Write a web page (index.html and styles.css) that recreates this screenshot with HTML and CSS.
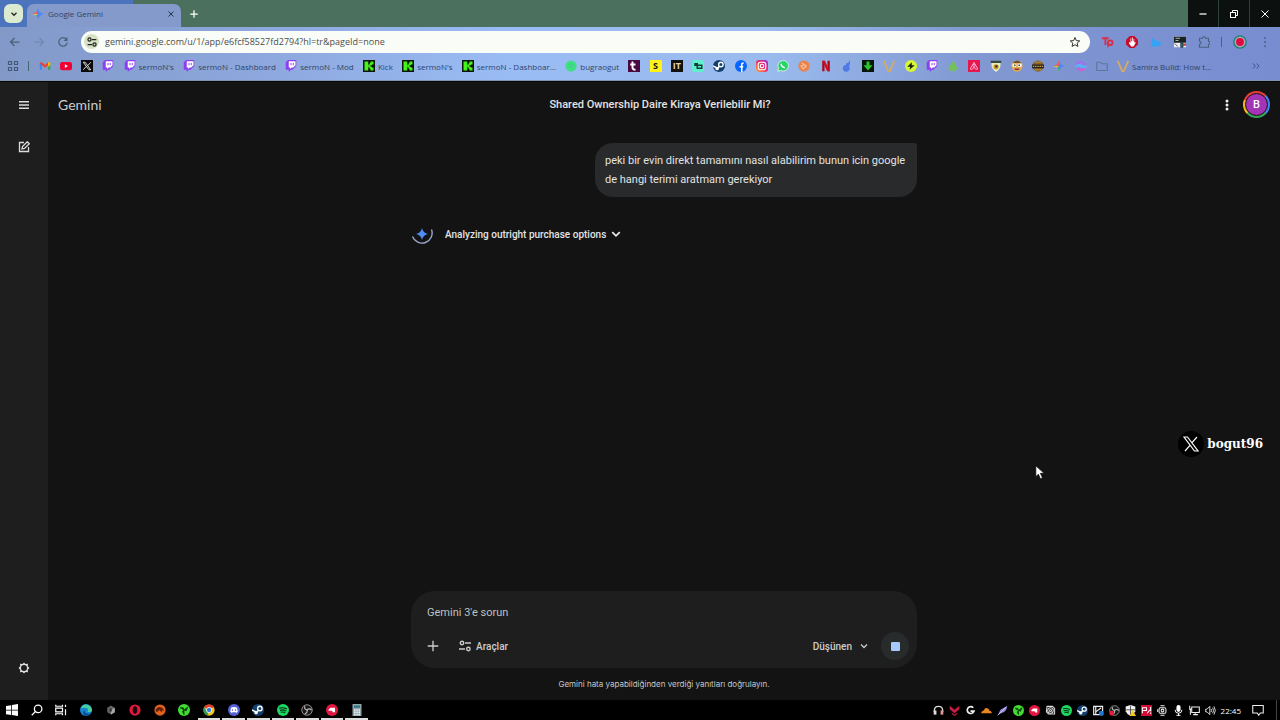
FILE: index.html
```html
<!DOCTYPE html>
<html lang="tr">
<head>
    <meta charset="UTF-8">
    <meta name="viewport" content="width=device-width, initial-scale=1.0">
    <title>Google Gemini</title>
    <link rel="stylesheet" href="styles.css">
</head>
<body>
    <header class="browser">
        <div class="tab-strip">
            <div class="tab-search">
                <button class="tab-list" aria-label="Sekmelerde ara"><svg class="i8" viewBox="0 0 16 16"><path d="M3 5.500l5 5 5-5" fill="none" stroke="#222" stroke-width="2.500"/></svg></button>
            </div>
            <div class="tab">
                <svg class="i12" viewBox="0 0 16 16"><use href="#gemini"/></svg>
                <span class="tab-title">Google Gemini</span>
                <button class="bare" aria-label="Sekmeyi kapat"><svg class="i8" viewBox="0 0 16 16"><path d="M3 3l10 10M13 3L3 13" stroke="#28344d" stroke-width="2"/></svg></button>
            </div>
            <button class="bare new-tab" aria-label="Yeni sekme"><svg class="i10" viewBox="0 0 16 16"><path d="M8 2v12M2 8h12" stroke="#fff" stroke-width="2"/></svg></button>
            <div class="window-buttons">
                <button aria-label="Simge durumuna küçült"><svg class="i8" viewBox="0 0 16 16"><path d="M1 8h14" stroke="#fff" stroke-width="2.500"/></svg></button>
                <button aria-label="Önceki boyut"><svg class="i8" viewBox="0 0 16 16" fill="none" stroke="#fff" stroke-width="2"><rect x="1" y="5" width="10" height="10"/><path d="M5 5V1h10v10h-4"/></svg></button>
                <button aria-label="Kapat"><svg class="i8" viewBox="0 0 16 16"><path d="M1 1l14 14M15 1L1 15" stroke="#fff" stroke-width="2"/></svg></button>
            </div>
        </div>

        <div class="toolbar">
            <button class="bare" aria-label="Geri"><svg class="i12" viewBox="0 0 24 24" fill="none" stroke="#4a6178" stroke-width="2.500"><path d="M21 12H4M11 4l-8 8 8 8"/></svg></button>
            <button class="bare" aria-label="İleri"><svg class="i12" viewBox="0 0 24 24" fill="none" stroke="#7189b0" stroke-width="2.500"><path d="M3 12h17M13 4l8 8-8 8"/></svg></button>
            <button class="bare" aria-label="Yenile"><svg class="i12" viewBox="0 0 24 24"><path d="M19 7a8.500 8.500 0 1 0 1.500 6" fill="none" stroke="#4a6178" stroke-width="2.500"/><path d="M21 2v8h-8z" fill="#4a6178"/></svg></button>
            <div class="omnibox">
                <button class="site-info" aria-label="Site bilgileri"><svg class="i10" viewBox="0 0 16 16"><use href="#sliders"/></svg></button>
                <input class="url" type="text" aria-label="Adres çubuğu" value="gemini.google.com/u/1/app/e6fcf58527fd2794?hl=tr&amp;pageId=none">
                <button class="bare" aria-label="Yer işareti ekle"><svg class="i12" viewBox="0 0 24 24"><path d="M12 3l2.700 6.200 6.800.6-5.200 4.500 1.600 6.600-5.900-3.500-5.900 3.500 1.600-6.600L2.500 9.800l6.800-.6z" fill="none" stroke="#333" stroke-width="2"/></svg></button>
            </div>
            <div class="extensions">
                <svg class="i12" viewBox="0 0 16 16"><path d="M0 3h9M4.500 3v9" stroke="#d52f4d" stroke-width="2.500"/><circle cx="11" cy="9" r="3" fill="none" stroke="#d52f4d" stroke-width="2.500"/><path d="M8 8v7" stroke="#d52f4d" stroke-width="2"/></svg>
                <svg class="i12" viewBox="0 0 16 16"><path d="M5 0h6l5 5v6l-5 5H5l-5-5V5z" fill="#c70d2c"/><path d="M4 8v2l3 4h3l3-5-1-1-1 1V4h-1v3H9V2H8v5H7V3H6v6z" fill="#fff"/></svg>
                <svg class="i12" viewBox="0 0 16 16"><path d="M3 2c1 3 4 3 6 5 3-1 5 1 6 3-2 4-6 5-9 4l-5 1c2-4 1-8 2-13z" fill="#36a2f4"/></svg>
                <svg class="i12" viewBox="0 0 16 16"><path d="M0 1h16v14H0z" fill="#eee"/><path d="M0 1h16v8H0z" fill="#17241f"/><path d="M2 3h6M2 6h4" stroke="#ddd"/><path d="M1 10l4 4M9 9h3v6H9z" stroke="#225" fill="#287b4b"/><path d="M12 10h4v3h-4z" fill="#c33"/></svg>
                <svg class="i12" viewBox="0 0 16 16"><path d="M2 3h4a2 2 0 0 1 4 0h4v4a2 2 0 0 1 0 4v4H2v-4a2 2 0 0 0 0-4z" fill="none" stroke="#49617c" stroke-width="1.500"/></svg>
                <span class="bar-divider"></span>
                <svg class="i14" viewBox="0 0 16 16"><circle cx="8" cy="8" r="7" fill="#b8a5b7" stroke="#10866d" stroke-width="1.500"/><circle cx="8" cy="8" r="4.500" fill="#df0a42"/></svg>
                <svg class="i12" viewBox="0 0 16 16" fill="#48618a"><circle cx="8" cy="2.500" r="1.300"/><circle cx="8" cy="8" r="1.300"/><circle cx="8" cy="13.500" r="1.300"/></svg>
            </div>
        </div>

        <nav class="bookmarks" aria-label="Yer işaretleri">
            <a href="#" aria-label="Uygulamalar"><svg class="i12" viewBox="0 0 16 16" fill="none" stroke="#415b78" stroke-width="1.600"><path d="M2 2h4v4H2zM10 2h4v4h-4zM2 10h4v4H2zM10 10h4v4h-4z"/></svg></a>
            <span class="bar-divider"></span>
            <a href="#" aria-label="Gmail"><svg class="i12" viewBox="0 0 16 16"><path d="M1 4h3v9H1z" fill="#4285f4"/><path d="M12 4h3v9h-3z" fill="#34a853"/><path d="M2 3.500l6 5 6-5" fill="none" stroke="#ea4335" stroke-width="3"/><path d="M12 3h3v4l-3 2z" fill="#fbbc04"/></svg></a>
            <a href="#" aria-label="YouTube"><svg class="i12" viewBox="0 0 16 16"><rect x="0" y="2.500" width="16" height="11" rx="3" fill="#f00033"/><path d="M6.500 5.500v5l4-2.500z" fill="#fff"/></svg></a>
            <a href="#" aria-label="X"><svg class="i12" viewBox="0 0 16 16"><path d="M0 0h16v16H0z" fill="#0a0a0a"/><path d="M3 3h2.500l7.500 10h-2.500zM13 3l-4 4.500M3 13l4-4.500" fill="none" stroke="#ddd" stroke-width="1.300"/></svg></a>
            <a href="#" aria-label="Twitch"><svg class="i12" viewBox="0 0 16 16"><use href="#twitch"/></svg></a>
            <a href="#"><svg class="i12" viewBox="0 0 16 16"><use href="#twitch"/></svg>sermoN's</a>
            <a href="#"><svg class="i12" viewBox="0 0 16 16"><use href="#twitch"/></svg>sermoN - Dashboard</a>
            <a href="#"><svg class="i12" viewBox="0 0 16 16"><use href="#twitch"/></svg>sermoN - Mod</a>
            <a href="#"><svg class="i12" viewBox="0 0 16 16"><use href="#kick"/></svg>Kick</a>
            <a href="#"><svg class="i12" viewBox="0 0 16 16"><use href="#kick"/></svg>sermoN's</a>
            <a href="#"><svg class="i12" viewBox="0 0 16 16"><use href="#kick"/></svg>sermoN - Dashboar...</a>
            <a href="#"><svg class="i12" viewBox="0 0 16 16"><circle cx="8" cy="8" r="7.500" fill="#42dd87"/><path d="M4 6q4-2 8 1M5 9q3-1 6 1" fill="none" stroke="#38c87a"/></svg>bugraogut</a>
            <a href="#" aria-label="Twitch Tracker"><svg class="i12" viewBox="0 0 16 16"><path d="M0 0h16v16H0z" fill="#4a0940"/><path d="M6 2v8q0 3 4 3M3 6h7" fill="none" stroke="#fff" stroke-width="2.600"/></svg></a>
            <a class="tile yellow" href="#">S</a>
            <a class="tile black" href="#">IT</a>
            <a href="#" aria-label="Robot"><svg class="i12" viewBox="0 0 16 16"><rect width="16" height="16" rx="3" fill="#5ff0cd"/><path d="M3 4h5v2h6v6H6V8H3z" fill="#123c35"/><path d="M8 8h4v2H8z" fill="#5ff0cd"/></svg></a>
            <a href="#" aria-label="Steam"><svg class="i12" viewBox="0 0 16 16"><use href="#steam"/></svg></a>
            <a href="#" aria-label="Facebook"><svg class="i12" viewBox="0 0 16 16"><circle cx="8" cy="8" r="8" fill="#0866ff"/><path d="M9 16v-8M6 9h5M9 9V6q0-2 2.500-2" fill="none" stroke="#fff" stroke-width="2"/></svg></a>
            <a href="#" aria-label="Instagram"><svg class="i12 instagram" viewBox="0 0 16 16" fill="none" stroke="#fff" stroke-width="1.500"><rect x="3" y="3" width="10" height="10" rx="3"/><circle cx="8" cy="8" r="2.300"/></svg></a>
            <a href="#" aria-label="WhatsApp"><svg class="i12" viewBox="0 0 16 16"><path d="M1 15l1-4a7 7 0 1 1 3 3z" fill="#25d366" stroke="#e9fff0"/><path d="M5.500 5q0 4 5 5.500" fill="none" stroke="#fff" stroke-width="2"/></svg></a>
            <a href="#" aria-label="Marka"><svg class="i12" viewBox="0 0 16 16"><circle cx="8" cy="8" r="7.500" fill="#ed8249"/><path d="M5 4l6 4-4 4-3-4 6-2" fill="none" stroke="#f8c4a4" stroke-width="1.500"/></svg></a>
            <a href="#" aria-label="Netflix"><svg class="i12" viewBox="0 0 16 16"><rect x="3" y="1" width="3" height="14" fill="#a90714"/><rect x="10" y="1" width="3" height="14" fill="#a90714"/><path d="M3 1h3.500L13 15H9.500z" fill="#d50a1c"/></svg></a>
            <a href="#" aria-label="Blog"><svg class="i12" viewBox="0 0 16 16" fill="#4e79e6"><circle cx="7" cy="11" r="4.500"/><circle cx="9" cy="6" r="2.500"/><path d="M9 5l3-5v6z"/></svg></a>
            <a href="#" aria-label="İndir"><svg class="i12" viewBox="0 0 16 16"><path d="M0 0h16v16H0z" fill="#071407"/><path d="M6 2h4v5h4l-6 7-6-7h4z" fill="#25c92d"/></svg></a>
            <a href="#" aria-label="Valorant"><svg class="i12" viewBox="0 0 16 16"><use href="#gold"/></svg></a>
            <a href="#" aria-label="Şimşek"><svg class="i12" viewBox="0 0 16 16"><circle cx="8" cy="8" r="8" fill="#d7f735"/><path d="M9 3L3 9h4l-1 4 7-6H9z" fill="#162010"/></svg></a>
            <a href="#" aria-label="Twitch"><svg class="i12" viewBox="0 0 16 16"><use href="#twitch"/></svg></a>
            <a href="#" aria-label="Damla"><svg class="i12" viewBox="0 0 16 16"><path d="M9 1l4 8q2 6-5 6-6 0-6-5 2-4 7-9z" fill="#74c05c"/></svg></a>
            <a href="#" aria-label="Airbnb"><svg class="i12" viewBox="0 0 16 16"><path d="M0 0h16v16H0z" fill="#e6174d"/><path d="M8 3l5 9q-2 2-5-2-3 4-5 2zM8 10q-3-4 0-4t0 4" fill="none" stroke="#fbd" stroke-width="1.200"/></svg></a>
            <a href="#" aria-label="Arma"><svg class="i12" viewBox="0 0 16 16"><path d="M2 4h12q1 8-6 12Q1 12 2 4z" fill="#e7edc4"/><path d="M1 1h14v3H1z" fill="#384c3c"/><circle cx="8" cy="9" r="3.500" fill="#d59b20"/><path d="M7 7h3v3H7z" fill="#333"/></svg></a>
            <a href="#" aria-label="Yüz"><svg class="i12" viewBox="0 0 16 16"><circle cx="8" cy="8" r="7.500" fill="#e0ac52"/><path d="M2 4q6-7 12 0" fill="#6c5030"/><path d="M2 5h5v4H2zM9 5h5v4H9z" fill="#fff"/><path d="M4 6h2v2H4zM10 6h2v2h-2z" fill="#443"/><path d="M5 12q3 1 6 0" stroke="#933" stroke-width="2"/></svg></a>
            <a href="#" aria-label="Rozet"><svg class="i12" viewBox="0 0 16 16"><circle cx="8" cy="8" r="7.500" fill="#85642a"/><path d="M0 6h16v5H0z" fill="#27231f"/><path d="M1 8.500h14M4 3h8M4 13h8" stroke="#cb9d45" stroke-width="1.500" stroke-dasharray="2 1"/></svg></a>
            <a href="#" aria-label="Gemini"><svg class="i12" viewBox="0 0 16 16"><use href="#gemini"/></svg></a>
            <a href="#" aria-label="Bulut"><svg class="i12" viewBox="0 0 16 16" fill="none" stroke-width="3"><path d="M2 8q0-6 7-5 4 1 5 4" stroke="#a46cf0"/><path d="M1 9q4-4 7-1t7 0" stroke="#58b4ff"/><path d="M3 11q5 5 10 0" stroke="#d05bd8"/></svg></a>
            <a href="#" aria-label="Klasör"><svg class="i12" viewBox="0 0 16 16"><path d="M1 3h5l2 2h7v9H1z" fill="none" stroke="#5e789c" stroke-width="1.500"/></svg></a>
            <a href="#"><svg class="i12" viewBox="0 0 16 16"><use href="#gold"/></svg>Samira Build: How t...</a>
            <button class="bare more" aria-label="Diğer yer işaretleri"><svg class="i10" viewBox="0 0 16 16"><path d="M3 4l4 4-4 4M9 4l4 4-4 4" fill="none" stroke="#3c5288" stroke-width="1.600"/></svg></button>
        </nav>
    </header>

    <div class="app">
        <aside class="sidebar">
            <button class="bare" aria-label="Menü"><svg class="i12" viewBox="0 0 24 24"><path d="M2 5.500h20M2 12h20M2 18.500h20" stroke="#ddd" stroke-width="3"/></svg></button>
            <button class="bare" aria-label="Yeni sohbet"><svg class="i12" viewBox="0 0 24 24" fill="none" stroke="#ddd" stroke-width="2.600"><path d="M12 3H3v18h18v-9"/><path d="M8 16l1-5 9.500-9.500 4 4L13 15z"/></svg></button>
            <button class="bare settings" aria-label="Ayarlar"><svg class="i12" viewBox="0 0 24 24"><path d="M12 1l3 3 5-.5-.5 5L23 12l-3.500 3.500.5 5-5-.5-3 3-3-3-5 .5.500-5L1 12l3.500-3.500-.5-5 5 .5z" fill="#ddd"/><circle cx="12" cy="12" r="6" fill="#1e1e1e"/></svg></button>
        </aside>

        <main class="main">
            <div class="main-header">
                <a class="brand" href="#">Gemini</a>
                <h1>Shared Ownership Daire Kiraya Verilebilir Mi?</h1>
                <div class="account">
                    <button class="bare" aria-label="Seçenekler"><svg class="i12" viewBox="0 0 24 24" fill="#eee"><circle cx="12" cy="4" r="3"/><circle cx="12" cy="12" r="3"/><circle cx="12" cy="20" r="3"/></svg></button>
                    <button class="avatar" aria-label="Google hesabı"><span>B</span></button>
                </div>
            </div>

            <div class="chat">
                <p class="bubble">peki bir evin direkt tamamını nasıl alabilirim bunun icin google de hangi terimi aratmam gerekiyor</p>
                <div class="thinking">
                    <svg class="spinner" viewBox="0 0 22 22"><path d="M1.500 13.500A10 10 0 0 0 20.500 6.500" fill="none" stroke="#9aa6cf" stroke-width="1.400"/><path d="M11 5q1 5 6 6-5 1-6 6-1-5-6-6 5-1 6-6z" fill="#4f8df5"/></svg>
                    <button class="bare thinking-toggle">Analyzing outright purchase options <svg class="i10" viewBox="0 0 16 16"><path d="M2 5l6 6 6-6" fill="none" stroke="#eee" stroke-width="2.500"/></svg></button>
                </div>
            </div>

            <div class="composer-wrap">
                <form class="composer">
                    <textarea rows="1" aria-label="İstem" placeholder="Gemini 3'e sorun"></textarea>
                    <div class="composer-actions">
                        <button type="button" class="bare" aria-label="Dosya ekle"><svg class="i12" viewBox="0 0 16 16"><path d="M8 1v14M1 8h14" stroke="#ccc" stroke-width="1.800"/></svg></button>
                        <button type="button" class="bare tools"><svg class="i12" viewBox="0 0 16 16"><use href="#sliders-light"/></svg>Araçlar</button>
                        <button type="button" class="bare mode">Düşünen <svg class="i8" viewBox="0 0 16 16"><path d="M2 5l6 6 6-6" fill="none" stroke="#ccc" stroke-width="2.500"/></svg></button>
                        <button type="button" class="stop" aria-label="Yanıtı durdur"><span></span></button>
                    </div>
                </form>
                <p class="note">Gemini hata yapabildiğinden verdiği yanıtları doğrulayın.</p>
            </div>
        </main>
    </div>

    <footer class="taskbar">
        <div class="task-apps">
            <button aria-label="Başlat"><svg class="i12" viewBox="0 0 16 16" fill="#fff"><path d="M0 2.500l7-1v6H0zM8 1.300L16 0v7.500H8zM0 8.500h7v6l-7-1zM8 8.500h8V16l-8-1.300z"/></svg></button>
            <button aria-label="Ara"><svg class="i12" viewBox="0 0 16 16" fill="none" stroke="#fff" stroke-width="1.700"><circle cx="9.500" cy="6.500" r="5"/><path d="M6 10l-5 5"/></svg></button>
            <button aria-label="Görev görünümü"><svg class="i12" viewBox="0 0 16 16" fill="none" stroke="#fff" stroke-width="1.600"><path d="M1 1v2h9V1M1 15v-2h9v2M1 5.500h9v5H1zM14 1v3M14 7v8"/></svg></button>
            <button aria-label="Edge"><svg class="i12" viewBox="0 0 16 16"><circle cx="8" cy="8" r="8" fill="#1686d0"/><path d="M1 6q3-7 9-5 6 2 6 8-2 3-6 1 2-5-3-5-4 0-6 1z" fill="#47cf9b"/><path d="M6 8q0 6 8 5-3 4-8 2-4-3 0-7z" fill="#0a4b94"/></svg></button>
            <button aria-label="Küp"><svg class="i12" viewBox="0 0 16 16"><path d="M8 2l5 3v6l-5 3-5-3V5z" fill="#646464"/><path d="M8 8l5-3v6l-5 3z" fill="#aaa"/><path d="M6 6h3v4H6z" fill="#333"/></svg></button>
            <button aria-label="Opera"><svg class="i12" viewBox="0 0 16 16"><circle cx="8" cy="8" r="7.500" fill="#e3173d"/><ellipse cx="8" cy="8" rx="3" ry="5" fill="#18090c"/></svg></button>
            <button aria-label="Oyun"><svg class="i12" viewBox="0 0 16 16"><circle cx="8" cy="8" r="7.500" fill="#e0601f"/><path d="M2 9q1-5 6-5 5 1 5 6l-2-2-1 3-3-3-3 3z" fill="#622209"/></svg></button>
            <button aria-label="Razer"><svg class="i12" viewBox="0 0 16 16"><use href="#green-fan"/></svg></button>
            <button class="active current" aria-label="Chrome"><svg class="i12" viewBox="0 0 16 16"><circle cx="8" cy="8" r="7.500" fill="#f7c51e"/><path d="M8 8L1.500 4.500A7.500 7.500 0 0 1 15 5H8z" fill="#e33b2e"/><path d="M1.500 4.500L6 11l1.500 4.500A7.500 7.500 0 0 1 1.500 4.500z" fill="#299c4c"/><circle cx="8" cy="8" r="3.500" fill="#317ae2" stroke="#fff"/></svg></button>
            <button class="active" aria-label="Discord"><svg class="i12" viewBox="0 0 16 16"><circle cx="8" cy="8" r="8" fill="#5661d8"/><path d="M4 5q4-2 8 0l1 5-2 2-1-1H6l-1 1-2-2z" fill="#fff"/><path d="M6 7v2M10 7v2" stroke="#5661d8" stroke-width="1.500"/></svg></button>
            <button class="active" aria-label="Steam"><svg class="i12" viewBox="0 0 16 16"><use href="#steam"/></svg></button>
            <button class="active" aria-label="Spotify"><svg class="i12" viewBox="0 0 16 16"><use href="#spotify"/></svg></button>
            <button class="active" aria-label="OBS"><svg class="i12" viewBox="0 0 16 16"><use href="#obs"/></svg></button>
            <button class="active" aria-label="Kayıt"><svg class="i12" viewBox="0 0 16 16"><use href="#red-app"/></svg></button>
            <button class="active" aria-label="Hesap makinesi"><svg class="i12" viewBox="0 0 16 16"><path d="M2 0h12v16H2z" fill="#91a4aa"/><path d="M4 2h8v3H4z" fill="#2b7585"/><path d="M4 8h8M4 11h8M4 14h8" stroke="#edf2f2" stroke-width="2" stroke-dasharray="2 1"/></svg></button>
        </div>

        <div class="tray">
            <svg class="i11" viewBox="0 0 16 16"><path d="M2 10V8q0-6 6-6t6 6v2" fill="none" stroke="#ddd" stroke-width="2"/><path d="M1 8h4v6H1z" fill="#ddd"/><path d="M11 8h4v6h-4z" fill="#e59595"/></svg>
            <svg class="i11" viewBox="0 0 16 16"><path d="M1 1l7 6 7-6v5l-7 6-7-6zM4 11l4 3 4-3v2l-4 3-4-3z" fill="#c71d43"/></svg>
            <svg class="i11" viewBox="0 0 16 16"><path d="M12 4a5 5 0 1 0 1 5H8" fill="none" stroke="#eee" stroke-width="2.500"/></svg>
            <svg class="i11" viewBox="0 0 16 16"><path d="M0 12q1-4 4-4 2-5 6-3 2 1 2 3 3 0 4 4z" fill="#e88521"/></svg>
            <svg class="i11" viewBox="0 0 16 16"><path d="M1 15L5 7l10-6q-1 9-9 11z" fill="#9389dd"/><path d="M1 15L13 3" stroke="#d9d5ff"/></svg>
            <svg class="i11" viewBox="0 0 16 16"><use href="#green-fan"/></svg>
            <svg class="i11" viewBox="0 0 16 16"><use href="#red-app"/></svg>
            <svg class="i11" viewBox="0 0 16 16" fill="none" stroke="#ddd" stroke-width="1.500"><path d="M3 2h8l3 3v8H5l-3-3z"/><circle cx="8" cy="8" r="4"/><circle cx="8" cy="8" r="1.500"/></svg>
            <svg class="i11" viewBox="0 0 16 16"><use href="#spotify"/></svg>
            <svg class="i11" viewBox="0 0 16 16"><use href="#steam"/></svg>
            <svg class="i11" viewBox="0 0 16 16"><path d="M1 2h13v12H1zM4 2v12M4 10l8-6" fill="none" stroke="#eee" stroke-width="1.700"/><circle cx="12" cy="12" r="3.500" fill="#1c79d8"/></svg>
            <svg class="i11" viewBox="0 0 16 16"><use href="#obs"/><circle cx="4" cy="12" r="3.500" fill="#e52036"/></svg>
            <svg class="i11" viewBox="0 0 16 16"><path d="M1 2l7-2 7 2v7q-2 5-7 7-5-2-7-7z" fill="#eee"/><path d="M8 1v14M1 7h14" stroke="#222"/><path d="M11 7l5 9H7z" fill="#f5c62c"/></svg>
            <svg class="i11" viewBox="0 0 16 16"><path d="M0 0h16v16H0z" fill="#d50c38"/><path d="M2 12V4h6v4H3M9 12l4-5M14 3v6M14 11v2" fill="none" stroke="#fff" stroke-width="1.500"/></svg>
            <svg class="i11" viewBox="0 0 16 16" fill="none" stroke="#eee" stroke-width="1.500"><rect x="3" y="4" width="10" height="8" rx="2"/><circle cx="8" cy="8" r="2"/><path d="M5 1h6M5 15h6M1 6v4"/></svg>
            <svg class="i11" viewBox="0 0 16 16"><rect x="5" y="0" width="6" height="10" rx="3" fill="#fff"/><path d="M3 7q0 5 5 5t5-5M8 12v4M5 15h6" fill="none" stroke="#fff" stroke-width="1.400"/></svg>
            <svg class="i11" viewBox="0 0 16 16" fill="none" stroke="#eee" stroke-width="1.500"><path d="M4 3h11v8H4zM9 11v3M6 14h7M1 1v5h3M2 6v8"/></svg>
            <svg class="i11" viewBox="0 0 16 16" fill="none" stroke="#eee" stroke-width="1.300"><path d="M1 6h2l4-4v12L3 10H1zM9 6q1 2 0 4M11 4q3 4 0 8M13 2q4 6 0 12"/></svg>
            <time>22:45</time>
            <svg class="i12 notify" viewBox="0 0 16 16"><path d="M1 2h14v10h-4l-2 3-2-3H1z" fill="none" stroke="#eee" stroke-width="1.400"/></svg>
            <span class="show-desktop"></span>
        </div>
    </footer>

    <div class="watermark">
        <span class="watermark-logo"><svg class="x-logo" viewBox="0 0 16 16"><path d="M1 1h3.500L15 15h-3.500zM14 1L9 6.700M2 15l5-5.700" fill="none" stroke="#fff" stroke-width="1.200"/></svg></span>
        bogut96
    </div>
    <svg class="cursor" viewBox="0 0 12 18"><path d="M1 1v13l3-3 2.500 5.500 2.500-1L6.500 10H11z" fill="#fff" stroke="#000" stroke-width=".8"/></svg>

    <!-- shared icons -->
    <svg class="sprite" aria-hidden="true">
        <symbol id="gemini" viewBox="0 0 16 16"><path d="M8 0q1 7 8 8H8z" fill="#4f86f7"/><path d="M8 0Q7 7 0 8h8z" fill="#ee5a5a"/><path d="M0 8q7 1 8 8V8z" fill="#efbf45"/><path d="M16 8q-7 1-8 8V8z" fill="#4f86f7"/><path d="M8 16q-.5-4-3-6l3-2z" fill="#39a88c"/></symbol>
        <symbol id="sliders" viewBox="0 0 16 16"><g fill="none" stroke="#222" stroke-width="2"><circle cx="4" cy="4" r="2.500"/><path d="M8 4h7M1 12h7"/><circle cx="12" cy="12" r="2.500"/></g></symbol>
        <symbol id="sliders-light" viewBox="0 0 16 16"><g fill="none" stroke="#ccc" stroke-width="1.800"><circle cx="4" cy="4" r="2.300"/><path d="M8 4h8M0 12h8"/><circle cx="12.500" cy="12" r="2.300"/></g></symbol>
        <symbol id="twitch" viewBox="0 0 16 16"><path d="M4 0L1 3v10h4v3l3-3h2l5-5V0z" fill="#8c3ff0"/><path d="M5 1.500h9V7l-3 3H9l-2 2v-2H5z" fill="#fff"/><path d="M8 4v3M11 4v3" stroke="#8c3ff0" stroke-width="1.300"/></symbol>
        <symbol id="kick" viewBox="0 0 16 16"><rect width="16" height="16" fill="#0b150b"/><g fill="#45f21a"><rect x="2" y="2" width="5" height="12"/><rect x="7" y="6" width="3" height="4"/><rect x="9" y="4" width="3" height="3"/><rect x="9" y="9" width="3" height="3"/><rect x="10" y="2" width="4" height="4"/><rect x="10" y="10" width="4" height="4"/></g></symbol>
        <symbol id="steam" viewBox="0 0 16 16"><circle cx="8" cy="8" r="8" fill="#12406e"/><circle cx="10.500" cy="6" r="3" fill="none" stroke="#fff" stroke-width="1.800"/><path d="M0 8l6 3 3-3" fill="none" stroke="#fff" stroke-width="2"/><circle cx="5.500" cy="11.500" r="2.300" fill="#fff"/></symbol>
        <symbol id="gold" viewBox="0 0 16 16"><path d="M1 1l6 14h2l6-14" fill="none" stroke="#d6aa66" stroke-width="2.500"/></symbol>
        <symbol id="green-fan" viewBox="0 0 16 16"><circle cx="8" cy="8" r="8" fill="#43da32"/><path d="M8 8L3 5h4zM8 8l5-4-2 5zM8 8v6l-2-4z" fill="#073d09" stroke="#073d09"/></symbol>
        <symbol id="spotify" viewBox="0 0 16 16"><circle cx="8" cy="8" r="8" fill="#1ed760"/><path d="M3 5.500q5-1.500 10 1M4 8.500q4-1.500 8 .8M5 11q3-1 6 .6" fill="none" stroke="#082d15" stroke-width="1.500"/></symbol>
        <symbol id="obs" viewBox="0 0 16 16"><circle cx="8" cy="8" r="7" fill="#171717" stroke="#bbb"/><path d="M8 8q-4-1-3-5M8 8q3-3 6 0M8 8q1 4-3 5" fill="none" stroke="#bbb" stroke-width="1.600"/></symbol>
        <symbol id="red-app" viewBox="0 0 16 16"><circle cx="8" cy="8" r="8" fill="#e31642"/><path d="M3 8l3-3h6v6H9l-1-2H4z" fill="#fff"/></symbol>
    </svg>
</body>
</html>
```

FILE: styles.css
```css
* { box-sizing: border-box; }
body {
    margin: 0;
    height: 100vh;
    display: flex;
    flex-direction: column;
    overflow: hidden;
    position: relative;
    background: #131313;
    color: #e3e3e3;
    font-family: Roboto, "Liberation Sans", sans-serif;
    font-size: 11px;
}
svg { display: block; flex: none; }
button { font: inherit; color: inherit; cursor: pointer; }
a { color: inherit; text-decoration: none; }
h1, p { margin: 0; }
.i8 { width: 8px; height: 8px; }
.i10 { width: 10px; height: 10px; }
.i11 { width: 11px; height: 11px; }
.i12 { width: 12px; height: 12px; }
.i14 { width: 14px; height: 14px; }
.bare { display: flex; align-items: center; padding: 0; border: 0; background: none; }
.sprite { position: absolute; width: 0; height: 0; }

/* browser window */
.browser {
    flex: none;
    font-family: "Open Sans", "Noto Sans", sans-serif;
    font-size: 8px;
    color: #2f4468;
    background: linear-gradient(90deg, #8299c8 0%, #8ea9df 22%, #9abcf5 40%, #9abbed 60%, #8198d2 76%, #788cd0 100%);
    border-bottom: 1px solid #8293ad;
}
.tab-strip {
    display: flex;
    align-items: center;
    height: 27px;
    background: linear-gradient(90deg, #4c74bd 133px, #4b705d 133px);
}
.tab-search { padding: 0 4px; }
.tab-list {
    display: flex;
    align-items: center;
    justify-content: center;
    width: 19px;
    height: 19px;
    padding: 0;
    border: 0;
    border-radius: 6px;
    background: #dcebcf;
}
.tab {
    display: flex;
    align-items: center;
    align-self: flex-end;
    gap: 4px;
    width: 154px;
    height: 23px;
    padding: 0 6px 4px 5px;
    border-radius: 7px 7px 0 0;
    background: #849aca;
}
.tab-title { flex: 1; }
.new-tab { margin-left: 8px; }
.window-buttons { display: flex; gap: 1px; height: 27px; margin-left: auto; background: #2c4437; }
.window-buttons button {
    display: flex;
    align-items: center;
    justify-content: center;
    width: 30px;
    padding: 0;
    border: 0;
    background: #0c1110;
}
.toolbar { display: flex; align-items: center; gap: 12px; height: 29px; padding: 0 9px; }
.omnibox {
    flex: 1;
    display: flex;
    align-items: center;
    gap: 6px;
    height: 22px;
    padding: 0 9px 0 3px;
    border-radius: 11px;
    background: #fafcf8;
}
.site-info {
    display: flex;
    align-items: center;
    justify-content: center;
    width: 15px;
    height: 15px;
    padding: 0;
    border: 0;
    border-radius: 8px;
    background: #d5e2c4;
}
.url { flex: 1; padding: 0; border: 0; outline: 0; background: none; color: #4c4f4c; font: inherit; font-size: 9px; }
.extensions { display: flex; align-items: center; gap: 12px; }
.bar-divider { width: 1px; height: 10px; background: #3e6a70; }
.extensions .bar-divider { margin: 0 -1px; }
.bookmarks { display: flex; align-items: center; justify-content: space-between; height: 24px; padding: 0 19px 4px 7px; white-space: nowrap; }
.bookmarks a { display: flex; align-items: center; gap: 3px; }
.bookmarks .tile { justify-content: center; width: 12px; height: 12px; font-size: 9px; font-weight: bold; line-height: 12px; }
.yellow { background: #fff21c; color: #111; }
.black { background: #111; color: #e8cfae; }
.more { margin-left: 30px; }
.instagram { border-radius: 3px; background: linear-gradient(45deg, #ffb13b, #ee2b67 50%, #8c35d8); }

/* gemini */
.app { flex: 1; display: flex; min-height: 0; border-top: 1px solid #060606; }
.sidebar {
    flex: none;
    display: flex;
    flex-direction: column;
    align-items: center;
    gap: 30px;
    width: 48px;
    padding: 17px 0 26px;
    background: #1e1e1e;
}
.settings { margin-top: auto; }
.main { flex: 1; display: flex; flex-direction: column; min-width: 0; }
.main-header {
    display: grid;
    grid-template-columns: 1fr auto 1fr;
    align-items: center;
    height: 45px;
    padding: 0 10px;
}
.brand { font-family: Lato, sans-serif; font-size: 14px; line-height: 16px; color: #ccc; }
.main-header h1 { margin-right: 8px; font-size: 11px; font-weight: 500; }
.account { display: flex; align-items: center; justify-content: flex-end; gap: 10px; }
.avatar {
    display: flex;
    width: 27px;
    height: 27px;
    padding: 2px;
    border: 0;
    border-radius: 50%;
    background: conic-gradient(#e33e35 45deg, #4285f4 45deg 135deg, #34a853 135deg 225deg, #f5b921 225deg 290deg, #e33e35 290deg);
}
.avatar span {
    flex: 1;
    border: 1px solid #131313;
    border-radius: 50%;
    background: #a334b5;
    color: #fff;
    font-weight: 500;
    line-height: 21px;
}
.chat, .composer-wrap { width: 100%; max-width: 506px; margin: 0 auto; }
.chat { flex: 1; display: flex; flex-direction: column; padding-top: 16px; }
.bubble {
    align-self: flex-end;
    max-width: 322px;
    padding: 8px 10px;
    border-radius: 18px 3px 18px 18px;
    background: #282a2c;
    line-height: 19px;
}
.thinking { display: flex; align-items: center; gap: 12px; margin-top: 26px; }
.spinner { width: 22px; height: 22px; }
.thinking-toggle { gap: 5px; font-size: 10px; font-weight: 500; }
.composer {
    display: flex;
    flex-direction: column;
    padding: 14px 8px 8px 16px;
    border-radius: 24px;
    background: #1e1e1e;
}
.composer textarea {
    padding: 0;
    border: 0;
    outline: 0;
    resize: none;
    background: none;
    color: #e3e3e3;
    font: inherit;
    line-height: 16px;
}
.composer textarea::placeholder { color: #bdc1c0; opacity: 1; }
.composer-actions { display: flex; align-items: center; margin-top: 11px; color: #ccc; font-size: 10px; font-weight: 500; }
.tools { gap: 5px; margin-left: 20px; }
.mode { gap: 8px; margin-left: auto; }
.stop {
    display: flex;
    align-items: center;
    justify-content: center;
    width: 28px;
    height: 28px;
    margin-left: 13px;
    padding: 0;
    border: 0;
    border-radius: 50%;
    background: #282b2c;
}
.stop span { width: 9px; height: 9px; border-radius: 1px; background: #a8c7fa; }
.note { padding: 10px 0; font-family: Inter, Roboto, sans-serif; font-size: 8px; line-height: 12px; text-align: center; color: #c4c7c5; }

/* windows taskbar */
.taskbar { flex: none; display: flex; justify-content: space-between; height: 20px; background: #000; }
.task-apps { display: flex; width: 369px; }
.task-apps button {
    flex: 1;
    display: flex;
    align-items: center;
    justify-content: center;
    padding: 2px 0 0;
    border: 0;
    border-bottom: 2px solid transparent;
    background: none;
}
.task-apps .active { border-image: linear-gradient(90deg, transparent 3px, #ddd 3px calc(100% - 3px), transparent 0) 2; border-width: 0 0 2px; border-style: solid; }
.tray { display: flex; align-items: center; gap: 5px; font-family: "Open Sans", sans-serif; font-size: 8px; color: #fff; }
.notify { margin: 0 7px 0 6px; }
.show-desktop { width: 4px; height: 20px; border-left: 1px solid #444; }

/* stream overlay */
.watermark {
    position: absolute;
    top: 431px;
    right: 17px;
    display: flex;
    align-items: center;
    gap: 3px;
    color: #fff;
    font-family: "DejaVu Serif", serif;
    font-size: 12px;
    font-weight: bold;
}
.watermark-logo {
    display: flex;
    align-items: center;
    justify-content: center;
    width: 26px;
    height: 26px;
    border-radius: 50%;
    background: #000;
}
.x-logo { width: 16px; height: 16px; }
.cursor { position: absolute; left: 1035px; top: 465px; width: 10px; height: 15px; }
```
